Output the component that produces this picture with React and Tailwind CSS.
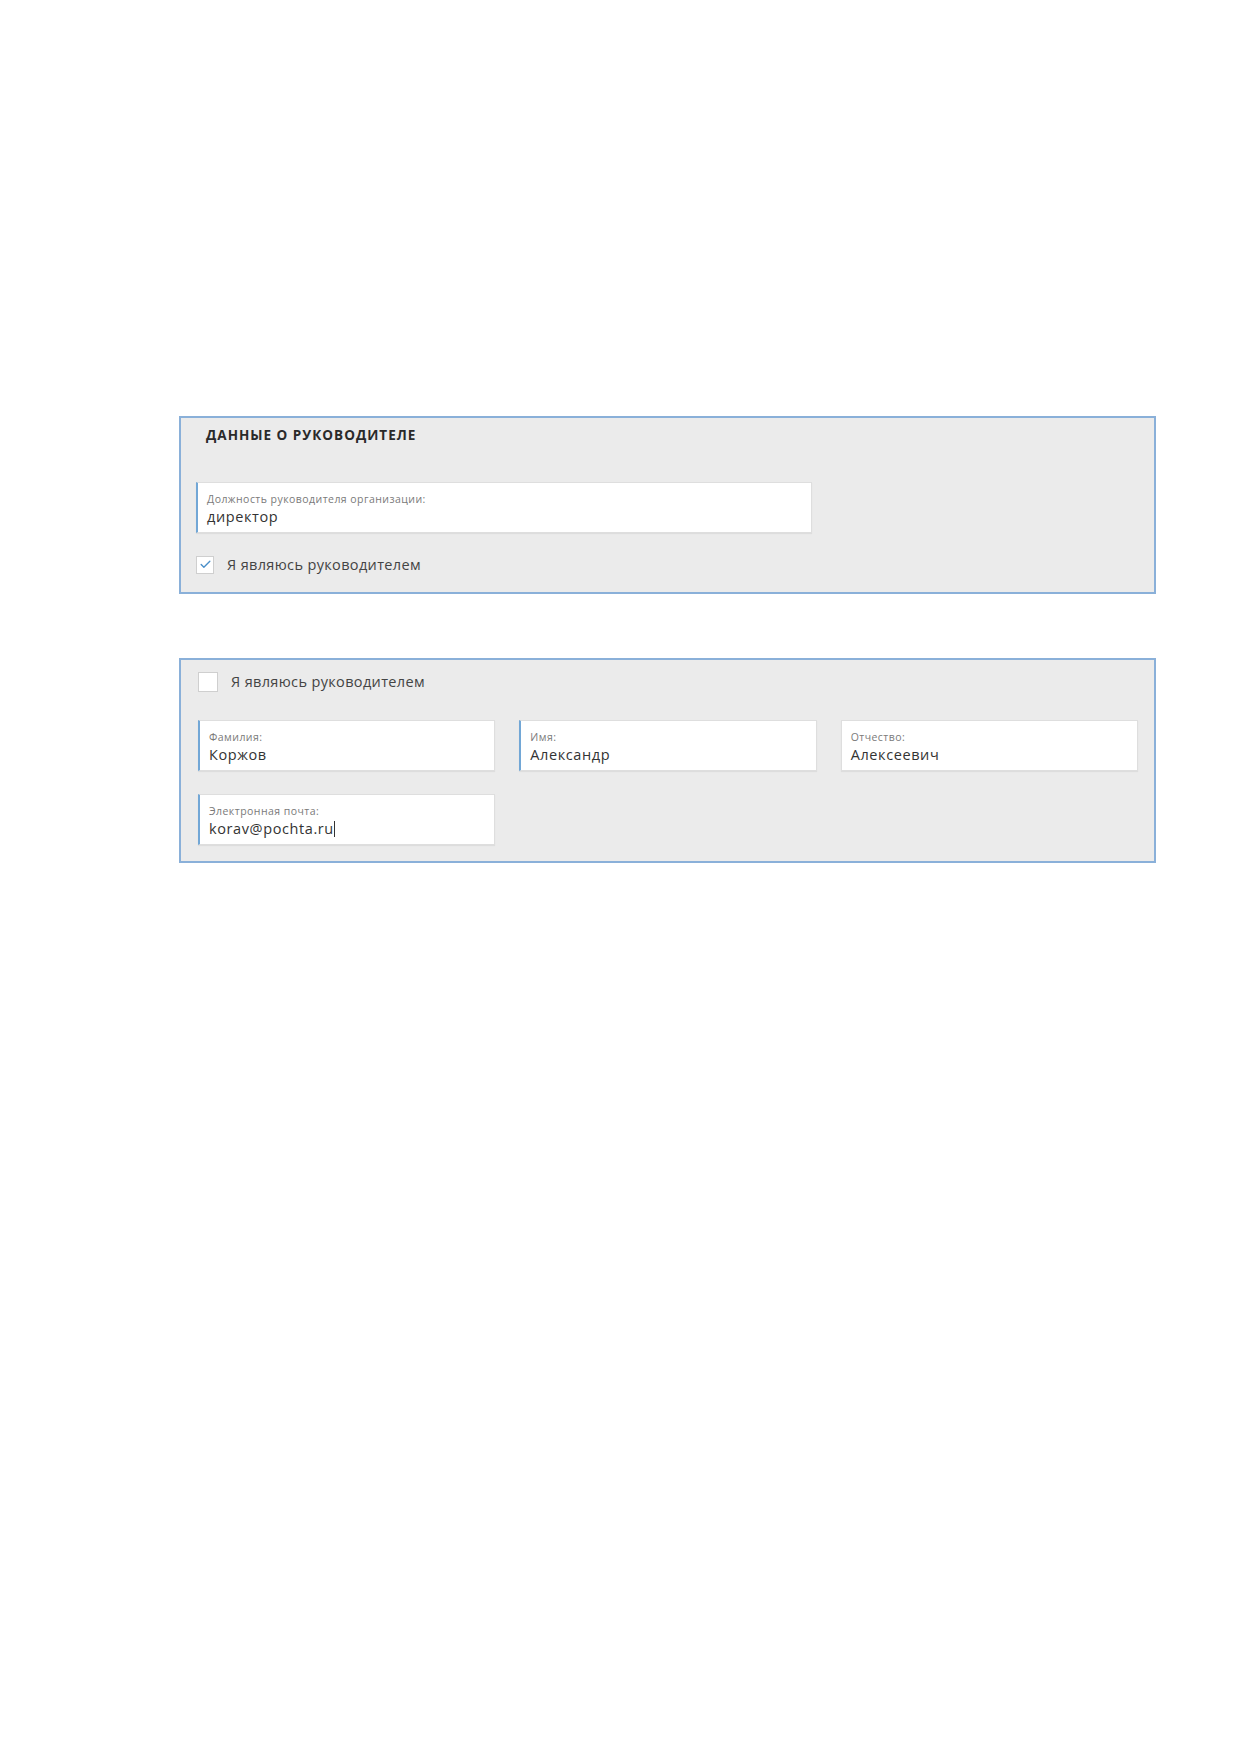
import { Check } from 'lucide-react'

const font = { fontFamily: '"Open Sans", "Noto Sans", sans-serif' }

function Field({ label, value, accent = true, caret = false }) {
  return (
    <div
      className={`h-[51px] bg-white border border-[#dedede] shadow-[0_1px_1px_rgba(0,0,0,0.06)] pl-[9px] pt-[9px] ${
        accent ? 'border-l-2 border-l-[#72a7d6]' : ''
      }`}
    >
      <div className="text-[10.5px] leading-[14px] tracking-[0.45px] text-[#7a7a7a]">{label}</div>
      <div className="text-[14.5px] leading-[22px] tracking-[0.6px] text-[#333]">
        {value}
        {caret && <span className="inline-block w-px h-[16px] bg-[#333] align-[-3px]" />}
      </div>
    </div>
  )
}

function Checkbox({ checked, label, size }) {
  return (
    <label className="flex items-center gap-[13px]">
      <span
        className={`${size} flex items-center justify-center bg-white border border-[#cfcfcf]`}
      >
        {checked && <Check className="w-[13px] h-[13px] text-[#4a8fc9]" strokeWidth={2.5} />}
      </span>
      <span className="text-[14.5px] tracking-[0.35px] text-[#444]">{label}</span>
    </label>
  )
}

export default function App() {
  return (
    <div className="min-h-[1752px] bg-white pt-[416px] pl-[179px]" style={font}>
      {/* manager position */}
      <section className="w-[977px] border-2 border-[#8ab0d9] bg-[#ebebeb] pt-[9px] pb-[16px] px-[15px]">
        <h3 className="ml-[10px] text-[13.5px] leading-[16px] font-bold tracking-[1px] text-[#2a2a2a]">
          ДАННЫЕ О РУКОВОДИТЕЛЕ
        </h3>
        <div className="w-[616px] mt-[39px]">
          <Field label="Должность руководителя организации:" value="директор" />
        </div>
        <div className="mt-[21px]">
          <Checkbox checked label="Я являюсь руководителем" size="w-[18px] h-[18px]" />
        </div>
      </section>

      {/* manager name and contacts */}
      <section className="w-[977px] mt-[64px] border-2 border-[#8ab0d9] bg-[#ebebeb] pt-[11px] pb-[16px] pl-[17px] pr-[16px]">
        <Checkbox label="Я являюсь руководителем" size="w-[20px] h-[20px]" />
        <div className="grid grid-cols-3 gap-x-[24px] gap-y-[23px] mt-[27px]">
          <Field label="Фамилия:" value="Коржов" />
          <Field label="Имя:" value="Александр" />
          <Field label="Отчество:" value="Алексеевич" accent={false} />
          <Field label="Электронная почта:" value="korav@pochta.ru" caret />
        </div>
      </section>
    </div>
  )
}
